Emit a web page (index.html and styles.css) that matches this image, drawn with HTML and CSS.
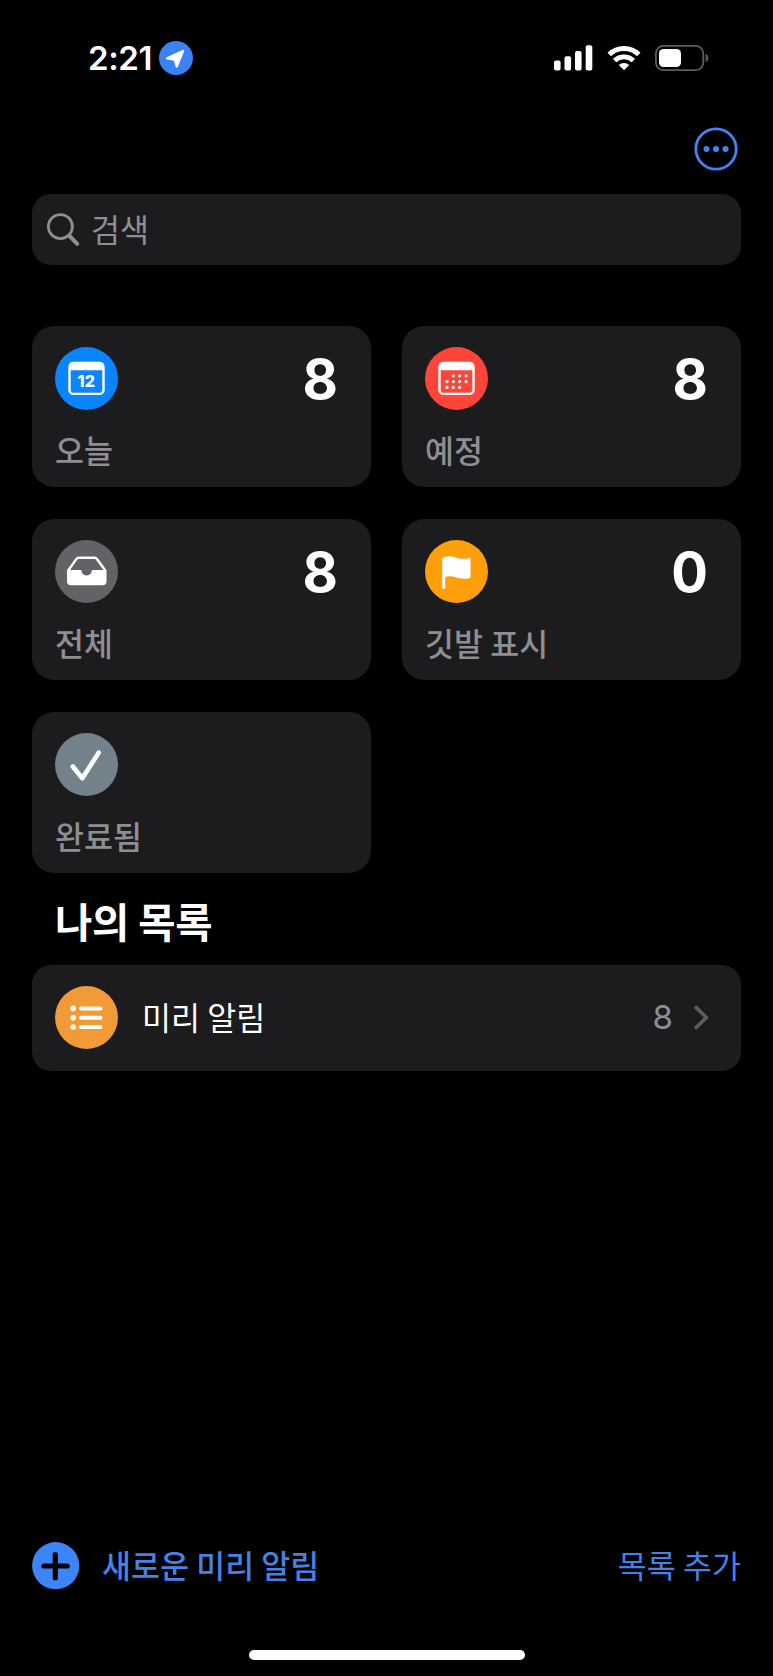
FILE: index.html
```html
<!DOCTYPE html>
<html lang="ko">

<head>
  <meta charset="UTF-8">
  <meta name="viewport" content="width=device-width, initial-scale=1.0">
  <title>미리 알림</title>

  <link rel="stylesheet" href="styles.css">
</head>

<body>
  <div class="screen">
    <header class="status-bar">
      <div class="status-left">
        <span class="time">2:21</span>
        <svg class="location" width="34" height="34" viewBox="0 0 34 34">
          <circle cx="17" cy="17" r="17" fill="#3b82f7" />
          <path d="M24 10 17.8 25.4 15.9 18.6 8.2 17.3Z" fill="#fff" stroke="#fff" stroke-width="2.4" stroke-linejoin="round" />
        </svg>
      </div>
      <div class="status-right">
        <svg width="39" height="26" viewBox="0 0 39 26" fill="#fff">
          <rect x="0" y="15.5" width="6.6" height="10" rx="2" />
          <rect x="10.5" y="11.3" width="6.6" height="14.2" rx="2" />
          <rect x="21" y="6" width="6.6" height="19.5" rx="2" />
          <rect x="31.7" y="0.3" width="6.6" height="25.2" rx="2" />
        </svg>
        <svg class="wifi" width="34" height="26" viewBox="0 0 34 26" fill="none" stroke="#fff">
          <path d="M2.2 9.5A21.4 21.4 0 0 1 31.8 9.5" stroke-width="5" />
          <path d="M7.6 15.6A13.6 13.6 0 0 1 26.4 15.6" stroke-width="4.8" />
          <path d="M17 25.3 11.8 20A7.5 7.5 0 0 1 22.2 20Z" fill="#fff" stroke="none" />
        </svg>
        <svg class="battery" width="54" height="26" viewBox="0 0 54 26">
          <rect x="0.9" y="0.9" width="47.4" height="24.2" rx="7.5" fill="none" stroke="#5c5c5e" stroke-width="1.8" />
          <rect x="4" y="4" width="22" height="18" rx="4.5" fill="#fff" />
          <path d="M50.6 9C54.4 10 54.4 16 50.6 17Z" fill="#5c5c5e" />
        </svg>
      </div>
    </header>

    <nav class="toolbar">
      <svg width="44" height="44" viewBox="0 0 44 44">
        <circle cx="22" cy="22" r="20.2" fill="none" stroke="#4285f0" stroke-width="2.8" />
        <g fill="#4285f0">
          <circle cx="12.5" cy="22" r="3" />
          <circle cx="22" cy="22" r="3" />
          <circle cx="31.5" cy="22" r="3" />
        </g>
      </svg>
    </nav>

    <div class="search">
      <svg width="34" height="34" viewBox="0 0 34 34" fill="none" stroke="#8e8e93" stroke-linecap="round">
        <circle cx="13.4" cy="13.6" r="12" stroke-width="2.8" />
        <path d="M22.6 23 30.2 30.8" stroke-width="4" />
      </svg>
      <span>검색</span>
    </div>

    <main class="cards">
      <section class="card">
        <div class="card-top">
          <svg class="icon" viewBox="0 0 63 63">
            <circle cx="31.5" cy="31.5" r="31.5" fill="#0a84ff" />
            <rect x="14.5" y="15.9" width="34" height="31" rx="4" fill="none" stroke="#fff" stroke-width="2.4" />
            <path d="M14 23.2V19a4 4 0 0 1 4-4h27a4 4 0 0 1 4 4v4.2Z" fill="#fff" />
            <text class="icon-day" x="31.2" y="40.4" text-anchor="middle">12</text>
          </svg>
          <span class="count">8</span>
        </div>
        <span class="label">오늘</span>
      </section>

      <section class="card">
        <div class="card-top">
          <svg class="icon" viewBox="0 0 63 63">
            <circle cx="31.5" cy="31.5" r="31.5" fill="#ff453a" />
            <rect x="14.5" y="15.9" width="34" height="31" rx="4" fill="none" stroke="#fff" stroke-width="2.4" />
            <path d="M14 23.2V19a4 4 0 0 1 4-4h27a4 4 0 0 1 4 4v4.2Z" fill="#fff" />
            <g fill="#fff">
              <circle cx="28.3" cy="28.8" r="1.6" />
              <circle cx="34.6" cy="28.8" r="1.6" />
              <circle cx="41" cy="28.8" r="1.6" />
              <circle cx="22" cy="34.6" r="1.6" />
              <circle cx="28.3" cy="34.6" r="1.6" />
              <circle cx="34.6" cy="34.6" r="1.6" />
              <circle cx="41" cy="34.6" r="1.6" />
              <circle cx="22" cy="40.4" r="1.6" />
              <circle cx="28.3" cy="40.4" r="1.6" />
              <circle cx="34.6" cy="40.4" r="1.6" />
            </g>
          </svg>
          <span class="count">8</span>
        </div>
        <span class="label">예정</span>
      </section>

      <section class="card">
        <div class="card-top">
          <svg class="icon" viewBox="0 0 63 63">
            <circle cx="31.5" cy="31.5" r="31.5" fill="#636367" />
            <path d="M13.2 30.5 21.3 19.2Q22.2 17.8 23.8 17.8H39.6Q41.2 17.8 42.1 19.2L50.3 30.5" fill="none" stroke="#fff" stroke-width="2.4" />
            <path d="M12 30H26.3C26.6 33.4 28.4 35.4 31.6 35.4S36.6 33.4 36.9 30H51.5V41.3a4 4 0 0 1-4 4H16a4 4 0 0 1-4-4Z" fill="#fff" />
          </svg>
          <span class="count">8</span>
        </div>
        <span class="label">전체</span>
      </section>

      <section class="card">
        <div class="card-top">
          <svg class="icon" viewBox="0 0 63 63">
            <circle cx="31.5" cy="31.5" r="31.5" fill="#ff9f0a" />
            <path d="M17.2 18.3C19.5 16.2 24.5 15.6 30 17.2 36 19 40 19.2 44 17.9Q45.6 17.4 45.6 19V36.4Q45.6 37.8 44.2 38.2C40 39.3 35.5 38.6 30.5 37.2 26 36 23 35.9 20.2 36.9V47.4A1.5 1.5 0 0 1 17.2 47.4Z" fill="#fff" />
          </svg>
          <span class="count">0</span>
        </div>
        <span class="label">깃발 표시</span>
      </section>

      <section class="card">
        <div class="card-top">
          <svg class="icon" viewBox="0 0 63 63">
            <circle cx="31.5" cy="31.5" r="31.5" fill="#73818b" />
            <path d="M17.8 33.5 27.3 45.2 43.8 19.6" fill="none" stroke="#fff" stroke-width="4.6" stroke-linecap="round" stroke-linejoin="round" />
          </svg>
        </div>
        <span class="label">완료됨</span>
      </section>
    </main>

    <h2 class="list-title">나의 목록</h2>

    <div class="list-row">
      <svg class="icon" viewBox="0 0 63 63">
        <circle cx="31.5" cy="31.5" r="31.5" fill="#f19a37" />
        <g fill="#fff">
          <circle cx="18.2" cy="22.4" r="2.8" />
          <circle cx="18.2" cy="31.7" r="2.8" />
          <circle cx="18.2" cy="41" r="2.8" />
          <rect x="24" y="20.4" width="23.5" height="4" rx="2" />
          <rect x="24" y="29.7" width="23.5" height="4" rx="2" />
          <rect x="24" y="39" width="23.5" height="4" rx="2" />
        </g>
      </svg>
      <span class="list-name">미리 알림</span>
      <span class="list-count">8</span>
      <svg width="15" height="25" viewBox="0 0 15 25">
        <path d="M2.2 2.5 12.4 12.5 2.2 22.5" fill="none" stroke="#5d5d60" stroke-width="3.8" stroke-linecap="round" stroke-linejoin="round" />
      </svg>
    </div>

    <footer class="bottom-bar">
      <svg width="48" height="48" viewBox="0 0 48 48">
        <circle cx="23.7" cy="23.7" r="23.6" fill="#3d84f8" />
        <path d="M23.3 12.5V35.7M12 24H35.2" stroke="#000" stroke-width="5.2" stroke-linecap="round" />
      </svg>
      <span class="new-reminder">새로운 미리 알림</span>
      <span class="add-list">목록 추가</span>
    </footer>

    <div class="home-indicator"></div>
  </div>
</body>

</html>
```
FILE: styles.css
```css
* {
  box-sizing: border-box;
}

body {
  margin: 0;
  background: #000;
  color: #fff;
  font-family: "Noto Sans CJK KR", sans-serif;
  word-spacing: -1.6px;
}

svg {
  display: block;
  flex-shrink: 0;
}

.screen {
  display: flex;
  flex-direction: column;
  width: 773px;
  height: 1676px;
  padding: 0 32px;
}

.status-bar {
  display: flex;
  justify-content: space-between;
  align-items: center;
  height: 115px;
  padding: 0 32px 0 56px;
}

.status-left,
.status-right {
  display: flex;
  align-items: center;
}

.time {
  width: 71px;
  font-family: Inter, sans-serif;
  font-size: 33px;
  font-weight: 600;
  letter-spacing: -0.4px;
}

.wifi {
  margin-left: 14px;
}

.battery {
  margin-left: 14px;
}

.toolbar {
  display: flex;
  justify-content: flex-end;
  height: 79px;
  padding: 12px 3px 0 0;
}

.search {
  display: flex;
  align-items: center;
  gap: 10px;
  height: 71px;
  padding: 0 15px;
  border-radius: 19px;
  background: #1c1c1e;
  color: #8e8e93;
  font-size: 31.5px;
  line-height: 40px;
}

.search span {
  padding-bottom: 4px;
}

.cards {
  display: grid;
  grid-template-columns: 339px 339px;
  grid-auto-rows: 161px;
  gap: 32px 31px;
  margin-top: 61px;
}

.card {
  display: flex;
  flex-direction: column;
  justify-content: space-between;
  padding: 21px 33px 18px 23px;
  border-radius: 22px;
  background: #1c1c1e;
}

.card-top {
  display: flex;
  justify-content: space-between;
}

.icon {
  width: 63px;
  height: 63px;
}

.icon-day {
  fill: #fff;
  font-family: Inter, sans-serif;
  font-size: 16px;
  font-weight: 800;
}

.count {
  font-family: Inter, sans-serif;
  font-size: 54.5px;
  font-weight: 700;
  line-height: 65px;
  height: 63px;
}

.label {
  color: #8e8e93;
  font-size: 31.5px;
  font-weight: 500;
  line-height: 40px;
}

.list-title {
  margin: 18px 0 0 23px;
  font-size: 40.5px;
  font-weight: 700;
  line-height: 60px;
  height: 74px;
  letter-spacing: -0.3px;
}

.list-row {
  display: flex;
  align-items: center;
  height: 106px;
  padding: 0 32px 2px 23px;
  border-radius: 19px;
  background: #1c1c1e;
}

.list-name {
  margin-left: 24px;
  padding-bottom: 3px;
  font-size: 31.5px;
  line-height: 40px;
}

.list-count {
  margin: 0 21px 0 auto;
  color: #8e8e93;
  font-family: Inter, sans-serif;
  font-size: 33px;
}

.bottom-bar {
  display: flex;
  align-items: center;
  height: 48px;
  margin-top: auto;
  color: #4482e6;
  font-size: 31.5px;
  line-height: 40px;
}

.bottom-bar span {
  padding-bottom: 4px;
}

.new-reminder {
  margin-left: 22px;
  font-weight: 500;
}

.add-list {
  margin-left: auto;
}

.home-indicator {
  width: 276px;
  height: 10px;
  margin: 60px auto 16px;
  border-radius: 5px;
  background: #fff;
}
```
